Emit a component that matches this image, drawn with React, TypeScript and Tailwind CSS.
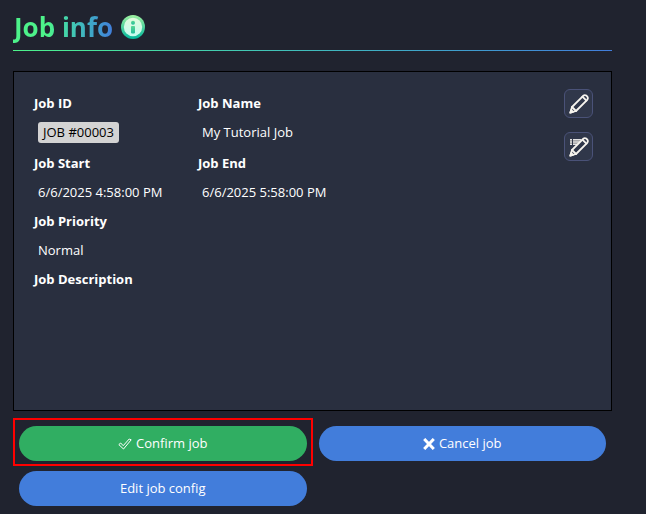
import type { ReactNode } from "react";

function InfoIcon() {
  return (
    <svg viewBox="0 0 24 24" className="size-6" role="img" aria-label="Info">
      <defs>
        <linearGradient id="ring" x1="0" y1="0" x2="0" y2="1">
          <stop offset="0" stopColor="#9ff0a0" />
          <stop offset="1" stopColor="#00b79c" />
        </linearGradient>
        <linearGradient id="disc" x1="0" y1="0" x2="0" y2="1">
          <stop offset="0" stopColor="#e2fbdc" />
          <stop offset="1" stopColor="#c4fbee" />
        </linearGradient>
        <linearGradient id="glyph" x1="0" y1="0" x2="0" y2="1">
          <stop offset="0" stopColor="#5ad694" />
          <stop offset="1" stopColor="#20bd9b" />
        </linearGradient>
      </defs>
      <circle cx="12" cy="12" r="12" fill="url(#ring)" />
      <circle cx="12" cy="12" r="9.2" fill="url(#disc)" />
      <circle cx="12" cy="7.8" r="2" fill="url(#glyph)" />
      <rect x="10" y="11" width="4" height="7.4" rx="0.8" fill="url(#glyph)" />
    </svg>
  );
}

function Pencil() {
  return (
    <g fill="none" stroke="#f7f4ee" strokeWidth="1.8" strokeLinejoin="round" strokeLinecap="round">
      <path d="M1.3 18.7 3 13 14.2 1.8Q15.7.6 17.3 1.6L18.4 2.7Q19.4 4.3 18.2 5.8L7 17Z" fill="#30374a" />
      <path d="M3 13 7 17M13.4 2.6l4 4" />
      <path d="M1.3 18.7 2.2 16l1.8 1.8Z" fill="#f7f4ee" />
    </g>
  );
}

function PencilIcon() {
  return (
    <svg viewBox="0 0 20 20" className="size-5" aria-hidden="true">
      <Pencil />
    </svg>
  );
}

function ListPencilIcon() {
  return (
    <svg viewBox="0 0 20 20" className="size-5" aria-hidden="true">
      <path d="M1 2h2v6H1ZM4 2h8v6H4Z" fill="#a9a9ab" />
      <path d="M1 2.5h2M1 5h2M1 7.5h2M4 2.5h8M4 5h7M4 7.5h5" stroke="#e2e2e2" strokeWidth="1" />
      <Pencil />
    </svg>
  );
}

function CheckIcon() {
  return (
    <svg viewBox="0 0 14 12" className="h-3 w-[14px]" aria-hidden="true">
      <path
        d="M.8 6.6 2.7 5l2.5 2.7L11.2 1l2 .8L5.5 11Z"
        fill="none"
        stroke="#fff"
        strokeWidth="1"
        strokeLinejoin="round"
      />
    </svg>
  );
}

function CrossIcon() {
  return (
    <svg viewBox="0 0 12 12" className="size-3" aria-hidden="true">
      <path d="M1.2 1 10.8 11M10.8 1 1.2 11" stroke="#fff" strokeWidth="3" />
    </svg>
  );
}

function Field({ label, children }: { label: string; children?: ReactNode }) {
  return (
    <div>
      <dt className="leading-[29px] font-bold">{label}</dt>
      {children && <dd className="min-h-[29px] pl-1 leading-[29px]">{children}</dd>}
    </div>
  );
}

function IconButton({ label, children }: { label: string; children: ReactNode }) {
  return (
    <button
      type="button"
      aria-label={label}
      className="flex size-[29px] items-center justify-center rounded-md border border-[#4a5278] bg-[#30374a]"
    >
      {children}
    </button>
  );
}

const pill = "flex h-[35px] w-full items-center justify-center gap-1 rounded-full pt-px text-white";

export default function App() {
  return (
    <main className="min-h-screen bg-[#20232f] pt-[11px] pr-[34px] pb-2 pl-[13px] font-['Open_Sans','Noto_Sans',sans-serif] text-[13px] text-white">
      <header>
        <div className="flex items-center gap-2 pb-[7px]">
          <h1 className="bg-linear-to-r from-[#4df28a] from-35% to-[#427ddb] bg-clip-text pl-px text-[26px] leading-8 font-bold text-transparent">
            Job info
          </h1>
          <InfoIcon />
        </div>
        <div className="h-px bg-linear-to-r from-[#4df28a] to-[#427ddb]" />
      </header>

      <section className="mt-5 flex min-h-[340px] items-start justify-between border border-black bg-[#292f3f] py-[17px] pr-[18px] pl-5">
        <dl className="grid grid-cols-[164px_auto]">
          <Field label="Job ID">
            <div className="flex h-[31px] items-start pt-1">
              <span className="rounded-[3px] bg-[#d3d3d3] px-[5px] leading-[21px] text-black">JOB #00003</span>
            </div>
          </Field>
          <Field label="Job Name">My Tutorial Job</Field>
          <Field label="Job Start">6/6/2025 4:58:00 PM</Field>
          <Field label="Job End">6/6/2025 5:58:00 PM</Field>
          <div className="col-span-2">
            <Field label="Job Priority">Normal</Field>
            <Field label="Job Description" />
          </div>
        </dl>
        <div className="flex flex-col gap-[14px]">
          <IconButton label="Edit job">
            <PencilIcon />
          </IconButton>
          <IconButton label="Edit job fields">
            <ListPencilIcon />
          </IconButton>
        </div>
      </section>

      <div className="mt-[15px] grid grid-cols-2 gap-x-3 gap-y-[10px] px-[6px]">
        <div className="relative">
          <button type="button" className={`${pill} bg-[#30ae62]`}>
            <CheckIcon />
            Confirm job
          </button>
          <div className="pointer-events-none absolute -inset-x-[6px] -top-2 -bottom-[5px] border-2 border-[#ff0000]" />
        </div>
        <button type="button" className={`${pill} bg-[#427ddb]`}>
          <CrossIcon />
          Cancel job
        </button>
        <button type="button" className={`${pill} bg-[#427ddb]`}>
          Edit job config
        </button>
      </div>
    </main>
  );
}
